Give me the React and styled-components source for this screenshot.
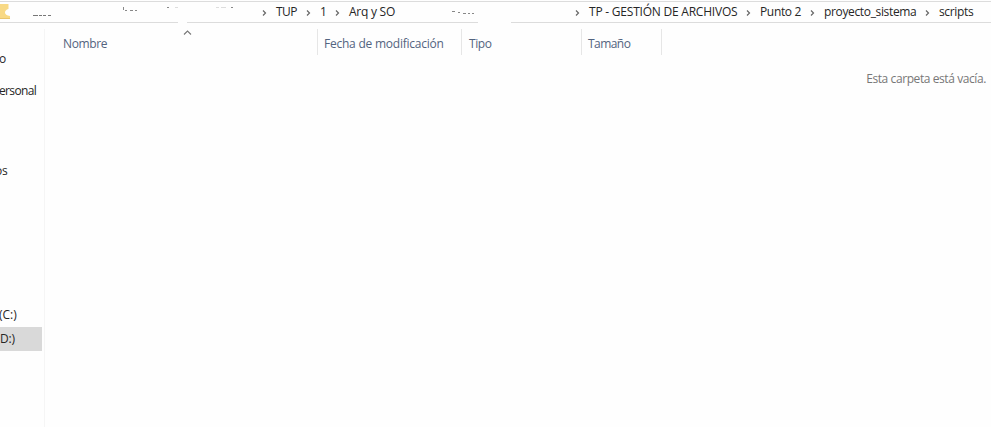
import React from "react";
import styled, { createGlobalStyle } from "styled-components";

const GlobalStyle = createGlobalStyle`
  * { box-sizing: border-box; }
  body { margin: 0; background: #fefefe; overflow: hidden; }
`;

const Explorer = styled.div`
  display: flex;
  flex-direction: column;
  width: 991px;
  height: 427px;
  background: #fefefe;
  color: #262626;
  font: 12px/16px "Open Sans", "Noto Sans", sans-serif;
  white-space: nowrap;
  overflow: hidden;
`;

const AddressBar = styled.header`
  position: relative;
  flex: none;
  display: flex;
  align-items: center;
  height: 22px;
  margin-top: 1px;
  padding-left: 262px;
  border-top: 1px solid #dcdcdc;
  border-bottom: 1px solid #dcdcdc;
`;

const Remnants = styled.svg`
  position: absolute;
  left: 0;
  top: -1px;
`;

const Crumb = styled.div`
  flex: none;
  display: flex;
  align-items: center;
  width: ${(p) => p.$width}px;
`;

const CrumbArrow = styled.svg`
  flex: none;
  width: 5px;
  height: 6px;
  margin: 2px 9px 0 0;
`;

const Label = styled.span`
  letter-spacing: ${(p) => p.$spacing || 0}px;
`;

const Body = styled.div`
  flex: 1;
  display: flex;
  min-height: 0;
`;

const Sidebar = styled.nav`
  flex: none;
  width: 45px;
  margin-top: 6px;
  padding-top: 18px;
  border-right: 1px solid #f5f5f5;
`;

const SideItem = styled.div`
  display: flex;
  align-items: center;
  width: 42px;
  height: 24px;
  margin-bottom: ${(p) => p.$after || 0}px;
  background: ${(p) => (p.$selected ? "#d9d9d9" : "transparent")};
`;

const SideText = styled(Label)`
  margin-left: ${(p) => p.$shift || 0}px;
`;

const Files = styled.main`
  flex: 1;
  display: flex;
  flex-direction: column;
`;

const Columns = styled.div`
  position: relative;
  display: flex;
  height: 26px;
  margin-top: 6px;
  color: #53647f;
`;

const Column = styled.div`
  display: flex;
  align-items: center;
  width: ${(p) => p.$width}px;
  padding: 3px 0 0 ${(p) => p.$pad || 6}px;
  border-right: 1px solid #e6e6e6;
`;

const SortArrow = styled.svg`
  position: absolute;
  left: 138px;
  top: 0;
`;

const Empty = styled.p`
  align-self: flex-end;
  margin: 16px 5px 0 0;
  color: #777;
`;

const crumbs = [
  { text: "TUP", width: 44, spacing: -0.5 },
  { text: "1", width: 29 },
  { text: "Arq y SO", width: 240, spacing: -0.25 },
  { text: "TP - GESTIÓN DE ARCHIVOS", width: 171, spacing: -0.22 },
  { text: "Punto 2", width: 64, spacing: -0.35 },
  { text: "proyecto_sistema", width: 115, spacing: -0.35 },
  { text: "scripts", width: 60, spacing: -0.35 },
];

const columns = [
  { text: "Nombre", width: 273, pad: 18, spacing: -0.35 },
  { text: "Fecha de modificación", width: 144, spacing: -0.23 },
  { text: "Tipo", width: 120, pad: 7, spacing: -0.4 },
  { text: "Tamaño", width: 80, spacing: -0.55 },
];

const places = [
  { text: "o", after: 8, shift: -1 },
  { text: "ersonal", after: 56, shift: -1, spacing: -0.65 },
  { text: "os", after: 120, shift: -5, spacing: -0.3 },
  { text: "(C:)", after: 0, shift: -1 },
  { text: "D:)", after: 0, shift: 0, selected: true, spacing: -0.2 },
];

export default function App() {
  return (
    <Explorer>
      <GlobalStyle />
      <AddressBar>
        <Remnants width="530" height="23" viewBox="0 1 530 23" fill="none">
          <path d="M0 4H8.5V9Q5 10 5 12.500Q5 15 10 16V18.500H0Z" fill="#f8d985" />
          <path d="M0 18.500H10" stroke="#e9c56d" />
          <path d="M33 15.500H38M39 15.500H42M43 15.500H46M48 15.500H51" stroke="#777" />
          <path d="M123.500 7V10M125 10.500H127M130 10.500H133M135 10.500H137" stroke="#888" />
          <path d="M167 7.500H169M231 7.500H233" stroke="#888" />
          <path d="M175 7.500H178M216 7.500H219M221 7.500H226" stroke="#ddd" />
          <path d="M452 11.500H455M458 12.500H460M463 13.500H466M468 13.500H470M472 13.500H474" stroke="#888" />
          <path d="M178 22.500H187M478 22.500H511" stroke="#fefefe" strokeWidth="2" />
        </Remnants>
        {crumbs.map((c) => (
          <Crumb key={c.text} $width={c.width}>
            <CrumbArrow viewBox="0 0 5 6">
              <path d="M1 .5 3.500 3 1 5.500" fill="none" stroke="#666" strokeWidth="1.200" />
            </CrumbArrow>
            <Label $spacing={c.spacing}>{c.text}</Label>
          </Crumb>
        ))}
      </AddressBar>
      <Body>
        <Sidebar>
          {places.map((p) => (
            <SideItem key={p.text} $after={p.after} $selected={p.selected}>
              <SideText $shift={p.shift} $spacing={p.spacing}>{p.text}</SideText>
            </SideItem>
          ))}
        </Sidebar>
        <Files>
          <Columns>
            {columns.map((c) => (
              <Column key={c.text} $width={c.width} $pad={c.pad}>
                <Label $spacing={c.spacing}>{c.text}</Label>
              </Column>
            ))}
            <SortArrow width="9" height="7" viewBox="0 0 9 7">
              <path d="M1 5.500 4.500 2 8 5.500" fill="none" stroke="#777" strokeWidth="1.100" />
            </SortArrow>
          </Columns>
          <Empty><Label $spacing={-0.41}>Esta carpeta está vacía.</Label></Empty>
        </Files>
      </Body>
    </Explorer>
  );
}
